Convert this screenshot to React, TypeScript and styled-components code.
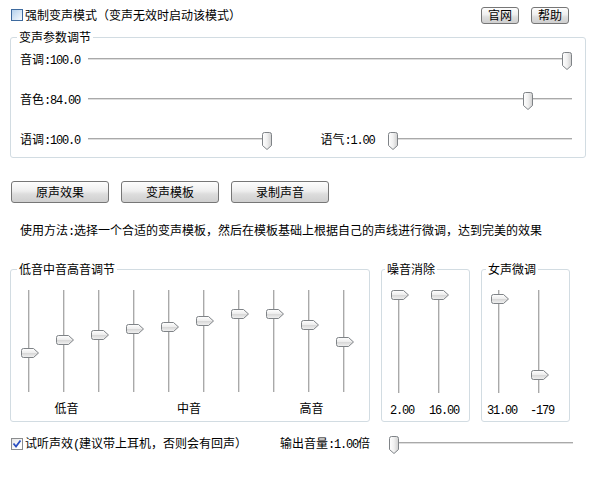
import React, { useId } from "react";
import styled, { createGlobalStyle } from "styled-components";

const Global = createGlobalStyle`
  html, body { margin: 0; padding: 0; background: #fff; }
  body {
    font-family: "Noto Sans CJK SC", "Noto Sans", sans-serif;
    font-size: 12px;
    color: #000;
  }
`;

const Page = styled.div`
  width: 594px;
  height: 492px;
  display: flex;
  flex-direction: column;
  overflow: hidden;
`;

const TopBar = styled.div`
  display: flex;
  align-items: center;
  height: 16px;
  margin-top: 7px;
  padding: 0 25px 0 11px;
`;

const CheckLabel = styled.div`
  display: flex;
  align-items: center;
  gap: 2px;
  line-height: 14px;
  white-space: nowrap;
`;

const Box = styled.span<{ $checked?: boolean }>`
  width: 12px;
  height: 12px;
  box-sizing: border-box;
  flex: none;
  display: flex;
  align-items: center;
  justify-content: center;
  border: 1px solid ${(p) => (p.$checked ? "#8a8c8e" : "#3d6a9e")};
  background: ${(p) =>
    p.$checked
      ? "linear-gradient(135deg, #e4e4e4, #ffffff 70%)"
      : "linear-gradient(135deg, #b3d0ec, #dbe9f6 60%, #f6fafd)"};
`;

const TopButtons = styled.div`
  margin-left: auto;
  display: flex;
  gap: 12px;
`;

const Btn = styled.button<{ $w: number; $h: number }>`
  width: ${(p) => p.$w}px;
  height: ${(p) => p.$h}px;
  box-sizing: border-box;
  padding: 0;
  border: 1px solid #767676;
  border-radius: 3px;
  background: linear-gradient(#fdfdfd, #eeeeee 45%, #dddddd 60%, #cfcfcf);
  font: 12px/14px "Noto Sans CJK SC", sans-serif;
  color: #000;
  display: flex;
  align-items: center;
  justify-content: center;
`;

const Group = styled.fieldset<{ $w: number }>`
  margin: 0;
  padding: 0;
  min-width: 0;
  width: ${(p) => p.$w}px;
  box-sizing: border-box;
  border: 1px solid #d2dce2;
  border-radius: 3px;
`;

const Legend = styled.legend<{ $ml: number }>`
  margin-left: ${(p) => p.$ml}px;
  padding: 0 2px;
  font-size: 12px;
  line-height: 14px;
  white-space: nowrap;
`;

const ParamGroup = styled(Group)`
  margin: 7px 0 0 10px;
`;

const ParamBody = styled.div`
  padding: 6px 13px 7px 9px;
  display: flex;
  flex-direction: column;
  gap: 20px;
`;

const ParamRow = styled.div`
  display: flex;
  height: 20px;
  gap: 49px;
`;

const Field = styled.div`
  display: flex;
  flex: 1;
  align-items: center;
  height: 20px;
`;

const FieldLabel = styled.span<{ $w: number }>`
  width: ${(p) => p.$w}px;
  flex: none;
  white-space: nowrap;
  line-height: 14px;
`;

const Num = styled.span`
  font-family: "Liberation Mono", "DejaVu Sans Mono", monospace;
  font-size: 12px;
  letter-spacing: -1.2px;
`;

const HTrack = styled.div`
  position: relative;
  flex: 1;
  height: 20px;
  background: linear-gradient(
    to bottom,
    transparent 8px,
    #a9a9a9 8px,
    #a9a9a9 9px,
    #dedede 9px,
    #dedede 10px,
    transparent 10px
  );
`;

const HThumbWrap = styled.svg`
  position: absolute;
  top: 2px;
  width: 10px;
  height: 18px;
`;

const VTrack = styled.div<{ $w: number; $h: number }>`
  position: relative;
  width: ${(p) => p.$w}px;
  height: ${(p) => p.$h}px;
  background: linear-gradient(
    to right,
    transparent ${(p) => Math.floor(p.$w / 2) - 1}px,
    #a9a9a9 ${(p) => Math.floor(p.$w / 2) - 1}px,
    #a9a9a9 ${(p) => Math.floor(p.$w / 2)}px,
    #dedede ${(p) => Math.floor(p.$w / 2)}px,
    #dedede ${(p) => Math.floor(p.$w / 2) + 1}px,
    transparent ${(p) => Math.floor(p.$w / 2) + 1}px
  );
`;

const VThumbWrap = styled.svg<{ $w: number }>`
  position: absolute;
  left: ${(p) => Math.floor(p.$w / 2) - 8}px;
  width: 18px;
  height: 10px;
`;

const ButtonRow = styled.div`
  display: flex;
  gap: 12px;
  margin: 23px 0 0 11px;
`;

const Hint = styled.div`
  margin: 20px 0 0 20px;
  line-height: 14px;
  white-space: nowrap;
`;

const GroupsRow = styled.div`
  display: flex;
  gap: 11px;
  margin: 23px 0 0 10px;
`;

const GroupBody = styled.div`
  padding: 14px 0 5px 0;
  display: flex;
  flex-direction: column;
`;

const SliderCols = styled.div<{ $col: number; $gap: number; $pl: number }>`
  display: grid;
  grid-auto-flow: column;
  grid-auto-columns: ${(p) => p.$col}px;
  column-gap: ${(p) => p.$gap}px;
  padding-left: ${(p) => p.$pl}px;
`;

const LabelCols = styled.div<{ $cols: string; $pl: number }>`
  display: grid;
  grid-template-columns: ${(p) => p.$cols};
  padding-left: ${(p) => p.$pl}px;
  margin-top: 9px;
  height: 14px;
  line-height: 14px;
  white-space: nowrap;
`;

const ColLabel = styled.span<{ $col: string }>`
  grid-column: ${(p) => p.$col};
  text-align: center;
`;

const BottomRow = styled.div`
  display: grid;
  grid-template-columns: 269px 109px 184px;
  align-items: center;
  height: 20px;
  margin: 12px 0 0 11px;
`;

const BottomField = styled.div`
  display: flex;
  align-items: center;
  height: 20px;
`;

function HSlider({ frac }: { frac: number }) {
  const id = useId().replace(/:/g, "");
  return (
    <HTrack>
      <HThumbWrap
        viewBox="0 0 10 18"
        style={{ left: `calc((100% - 10px) * ${frac})` }}
      >
        <defs>
          <linearGradient id={`h${id}`} x1="0" y1="0" x2="1" y2="0">
            <stop offset="0" stopColor="#ffffff" />
            <stop offset="0.5" stopColor="#f1f1f1" />
            <stop offset="1" stopColor="#cfcfcf" />
          </linearGradient>
        </defs>
        <path
          d="M0.5 2.5 Q0.5 0.5 2.5 0.5 H7.5 Q9.5 0.5 9.5 2.5 V13.5 L5 17.5 L0.5 13.5 Z"
          fill={`url(#h${id})`}
          stroke="#7f8387"
          strokeWidth="1"
        />
      </HThumbWrap>
    </HTrack>
  );
}

function VSlider({ top, w, h }: { top: number; w: number; h: number }) {
  const id = useId().replace(/:/g, "");
  return (
    <VTrack $w={w} $h={h}>
      <VThumbWrap $w={w} viewBox="0 0 18 10" style={{ top: `${top}px` }}>
        <defs>
          <linearGradient id={`v${id}`} x1="0" y1="0" x2="0" y2="1">
            <stop offset="0" stopColor="#ffffff" />
            <stop offset="0.45" stopColor="#eeeeee" />
            <stop offset="0.55" stopColor="#d9d9d9" />
            <stop offset="1" stopColor="#f2f2f2" />
          </linearGradient>
        </defs>
        <path
          d="M2.5 0.5 H12.5 L17.5 5 L12.5 9.5 H2.5 Q0.5 9.5 0.5 7.5 V2.5 Q0.5 0.5 2.5 0.5 Z"
          fill={`url(#v${id})`}
          stroke="#7f8387"
          strokeWidth="1"
        />
      </VThumbWrap>
    </VTrack>
  );
}

function Check() {
  return (
    <svg width="10" height="10" viewBox="0 0 10 10">
      <path
        d="M1.5 4.5 L4 7.5 L8.5 1.5"
        fill="none"
        stroke="#2a4fc2"
        strokeWidth="1.8"
      />
    </svg>
  );
}

const eqTops = [58, 45, 40, 34, 32, 26, 19, 19, 30, 47];

export default function App() {
  return (
    <>
      <Global />
      <Page>
        <TopBar>
          <CheckLabel>
            <Box />
            <span>强制变声模式（变声无效时启动该模式）</span>
          </CheckLabel>
          <TopButtons>
            <Btn $w={38} $h={17}>官网</Btn>
            <Btn $w={38} $h={17}>帮助</Btn>
          </TopButtons>
        </TopBar>

        <ParamGroup $w={576}>
          <Legend $ml={6}>变声参数调节</Legend>
          <ParamBody>
            <ParamRow>
              <Field>
                <FieldLabel $w={68}>
                  音调<Num>:100.0</Num>
                </FieldLabel>
                <HSlider frac={1} />
              </Field>
            </ParamRow>
            <ParamRow>
              <Field>
                <FieldLabel $w={68}>
                  音色<Num>:84.00</Num>
                </FieldLabel>
                <HSlider frac={0.918} />
              </Field>
            </ParamRow>
            <ParamRow>
              <Field>
                <FieldLabel $w={68}>
                  语调<Num>:100.0</Num>
                </FieldLabel>
                <HSlider frac={1} />
              </Field>
              <Field>
                <FieldLabel $w={67}>
                  语气<Num>:1.00</Num>
                </FieldLabel>
                <HSlider frac={0} />
              </Field>
            </ParamRow>
          </ParamBody>
        </ParamGroup>

        <ButtonRow>
          <Btn $w={98} $h={22}>原声效果</Btn>
          <Btn $w={98} $h={22}>变声模板</Btn>
          <Btn $w={98} $h={22}>录制声音</Btn>
        </ButtonRow>

        <Hint>
          使用方法<Num>:</Num>选择一个合适的变声模板，然后在模板基础上根据自己的声线进行微调，达到完美的效果
        </Hint>

        <GroupsRow>
          <Group $w={360}>
            <Legend $ml={6}>低音中音高音调节</Legend>
            <GroupBody>
              <SliderCols $col={35} $gap={0} $pl={1}>
                {eqTops.map((t, i) => (
                  <VSlider key={i} top={t} w={35} h={102} />
                ))}
              </SliderCols>
              <LabelCols $cols="repeat(10, 35px)" $pl={3}>
                <ColLabel $col="2">低音</ColLabel>
                <ColLabel $col="5 / span 2">中音</ColLabel>
                <ColLabel $col="9">高音</ColLabel>
              </LabelCols>
            </GroupBody>
          </Group>

          <Group $w={89}>
            <Legend $ml={3}>噪音消除</Legend>
            <GroupBody>
              <SliderCols $col={30} $gap={10} $pl={2}>
                <VSlider top={0} w={30} h={103} />
                <VSlider top={0} w={30} h={103} />
              </SliderCols>
              <LabelCols $cols="40px 44px" $pl={0}>
                <ColLabel $col="1"><Num>2.00</Num></ColLabel>
                <ColLabel $col="2"><Num>16.00</Num></ColLabel>
              </LabelCols>
            </GroupBody>
          </Group>

          <Group $w={89}>
            <Legend $ml={4}>女声微调</Legend>
            <GroupBody>
              <SliderCols $col={30} $gap={10} $pl={2}>
                <VSlider top={4} w={30} h={103} />
                <VSlider top={80} w={30} h={103} />
              </SliderCols>
              <LabelCols $cols="40px 40px" $pl={0}>
                <ColLabel $col="1"><Num>31.00</Num></ColLabel>
                <ColLabel $col="2"><Num>-179</Num></ColLabel>
              </LabelCols>
            </GroupBody>
          </Group>
        </GroupsRow>

        <BottomRow>
          <CheckLabel>
            <Box $checked>
              <Check />
            </Box>
            <span>
              试听声效<Num>(</Num>建议带上耳机，否则会有回声）
            </span>
          </CheckLabel>
          <FieldLabel $w={109}>
            输出音量<Num>:1.00</Num>倍
          </FieldLabel>
          <BottomField>
            <HSlider frac={0} />
          </BottomField>
        </BottomRow>
      </Page>
    </>
  );
}
